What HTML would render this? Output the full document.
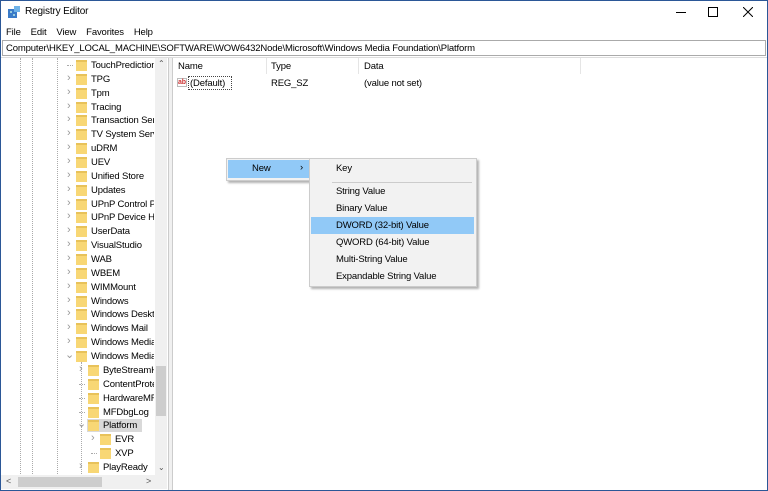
<!DOCTYPE html><html><head><style>
*{margin:0;padding:0;box-sizing:border-box}
body{width:768px;height:491px;overflow:hidden;background:#fff;font-family:"Liberation Sans",sans-serif;font-size:9.5px;letter-spacing:-0.15px;color:#000;position:relative}
.a{position:absolute;white-space:nowrap}
.fd{position:absolute;width:11px;height:11px;background:#f8d775;border-top:2px solid #e8c25a}
.vl{position:absolute;border-left:1px dotted #aaa}
.chev{position:absolute;font-size:11px;color:#999}
</style></head><body>
<div class="a" style="left:0;top:0;width:768px;height:491px;border:1px solid #2b5797"></div>
<svg class="a" style="left:8px;top:6px" width="12" height="12"><rect x="0" y="3" width="9" height="9" fill="#3a7bc8"/><rect x="6" y="0" width="6" height="6" fill="#6fb3e8"/><rect x="2" y="5" width="2" height="2" fill="#9cd"/><rect x="5" y="8" width="2" height="2" fill="#9cd"/></svg>
<div class="a" style="left:25px;top:6px;font-size:10px">Registry Editor</div>
<div class="a" style="left:676px;top:12px;width:10px;height:1px;background:#000"></div>
<div class="a" style="left:708px;top:7px;width:10px;height:10px;border:1px solid #000"></div>
<svg class="a" style="left:743px;top:7px" width="10" height="10"><path d="M0 0L10 10M10 0L0 10" stroke="#000" stroke-width="1"/></svg>
<div class="a" style="left:6px;top:27px">File&nbsp;&nbsp;&nbsp; Edit&nbsp;&nbsp;&nbsp; View&nbsp;&nbsp;&nbsp; Favorites&nbsp;&nbsp;&nbsp; Help</div>
<div class="a" style="left:2px;top:40px;width:764px;height:16px;border:1px solid #aaa"></div>
<div class="a" style="left:6px;top:43px">Computer\HKEY_LOCAL_MACHINE\SOFTWARE\WOW6432Node\Microsoft\Windows Media Foundation\Platform</div>
<div class="a" style="left:1px;top:57px;width:766px;height:1px;background:#ddd"></div>
<div class="vl" style="left:20px;top:58px;height:416px"></div>
<div class="vl" style="left:32px;top:58px;height:416px"></div>
<div class="vl" style="left:57px;top:58px;height:416px"></div>
<div class="vl" style="left:81px;top:362px;height:112px"></div>
<div id="tree"></div>
<div class="a" style="left:155px;top:58px;width:12px;height:417px;background:#f0f0f0"></div>
<div class="a" style="left:156px;top:366px;width:10px;height:50px;background:#cdcdcd"></div>
<div class="a" style="left:158px;top:59px;font-size:8px;color:#555">&#x2303;</div>
<div class="a" style="left:158px;top:463px;font-size:8px;color:#555">&#x2304;</div>
<div class="a" style="left:1px;top:475px;width:166px;height:14px;background:#f0f0f0"></div>
<div class="a" style="left:18px;top:477px;width:84px;height:10px;background:#cdcdcd"></div>
<div class="a" style="left:6px;top:476px;font-size:9px;color:#555">&lt;</div>
<div class="a" style="left:146px;top:476px;font-size:9px;color:#555">&gt;</div>
<div class="a" style="left:168px;top:58px;width:5px;height:432px;background:#f0f0f0;border-left:1px solid #ccc;border-right:1px solid #ccc"></div>
<div class="a" style="left:266px;top:58px;width:1px;height:16px;background:#e5e5e5"></div>
<div class="a" style="left:358px;top:58px;width:1px;height:16px;background:#e5e5e5"></div>
<div class="a" style="left:580px;top:58px;width:1px;height:16px;background:#e5e5e5"></div>
<div class="a" style="left:178px;top:61px">Name</div>
<div class="a" style="left:271px;top:61px">Type</div>
<div class="a" style="left:364px;top:61px">Data</div>
<div class="a" style="left:177px;top:78px;width:10px;height:9px;border:1px solid #bbb;color:#c33;font-size:7px;line-height:7px;font-weight:bold">ab</div>
<div class="a" style="left:188px;top:76px;width:44px;height:14px;border:1px dotted #444"></div>
<div class="a" style="left:190px;top:78px">(Default)</div>
<div class="a" style="left:271px;top:78px">REG_SZ</div>
<div class="a" style="left:364px;top:78px">(value not set)</div>
<div class="a" style="left:226px;top:158px;width:86px;height:23px;background:#f2f2f2;border:1px solid #ccc;box-shadow:2px 2px 2px rgba(0,0,0,.3)"></div>
<div class="a" style="left:228px;top:160px;width:82px;height:18px;background:#91c9f7"></div>
<div class="a" style="left:252px;top:163px">New</div>
<div class="a" style="left:300px;top:162px">&#x203A;</div>
<div class="a" style="left:309px;top:158px;width:168px;height:129px;background:#f2f2f2;border:1px solid #ccc;box-shadow:2px 2px 2px rgba(0,0,0,.3)"></div>
<div class="a" style="left:332px;top:182px;width:140px;height:1px;background:#ccc"></div>
<div class="a" style="left:311px;top:217px;width:163px;height:17px;background:#91c9f7"></div>
<div class="a" style="left:336px;top:163px">Key</div>
<div class="a" style="left:336px;top:186px">String Value</div>
<div class="a" style="left:336px;top:203px">Binary Value</div>
<div class="a" style="left:336px;top:220px">DWORD (32-bit) Value</div>
<div class="a" style="left:336px;top:237px">QWORD (64-bit) Value</div>
<div class="a" style="left:336px;top:254px">Multi-String Value</div>
<div class="a" style="left:336px;top:271px">Expandable String Value</div>
<script>
var r=[["TouchPrediction",1,0],["TPG",1,1],["Tpm",1,1],["Tracing",1,1],["Transaction Serv",1,1],["TV System Servi",1,1],["uDRM",1,1],["UEV",1,1],["Unified Store",1,1],["Updates",1,1],["UPnP Control P",1,1],["UPnP Device Ho",1,1],["UserData",1,1],["VisualStudio",1,1],["WAB",1,1],["WBEM",1,1],["WIMMount",1,1],["Windows",1,1],["Windows Deskto",1,1],["Windows Mail",1,1],["Windows Media",1,1],["Windows Media",1,2],["ByteStreamH",2,1],["ContentProte",2,0],["HardwareMF",2,0],["MFDbgLog",2,0],["Platform",2,2],["EVR",3,1],["XVP",3,0],["PlayReady",2,1]];
var h="";r.forEach(function(e,i){var y=58+i*13.86,x=76+(e[1]-1)*12;
if(e[0]=="Platform")h+='<div class="a" style="left:'+(x-1)+'px;top:'+(y+1)+'px;width:55px;height:13px;background:#d9d9d9"></div>';
h+='<div class="fd" style="left:'+x+'px;top:'+(y+2)+'px"></div>';
h+='<div class="a" style="left:'+(x+15)+'px;top:'+(y+2)+'px;width:'+(154-x-15)+'px;overflow:hidden">'+e[0]+'</div>';
if(e[2]==1)h+='<div class="chev" style="left:'+(x-9)+'px;top:'+(y)+'px">&#x203A;</div>';
if(e[2]==2)h+='<div class="chev" style="left:'+(x-11)+'px;top:'+(y-1)+'px">&#x2304;</div>';
if(e[2]==0)h+='<div class="a" style="left:'+(x-9)+'px;top:'+(y+7)+'px;width:6px;border-top:1px dotted #aaa"></div>';});
document.getElementById("tree").innerHTML=h;
</script>
</body></html>
